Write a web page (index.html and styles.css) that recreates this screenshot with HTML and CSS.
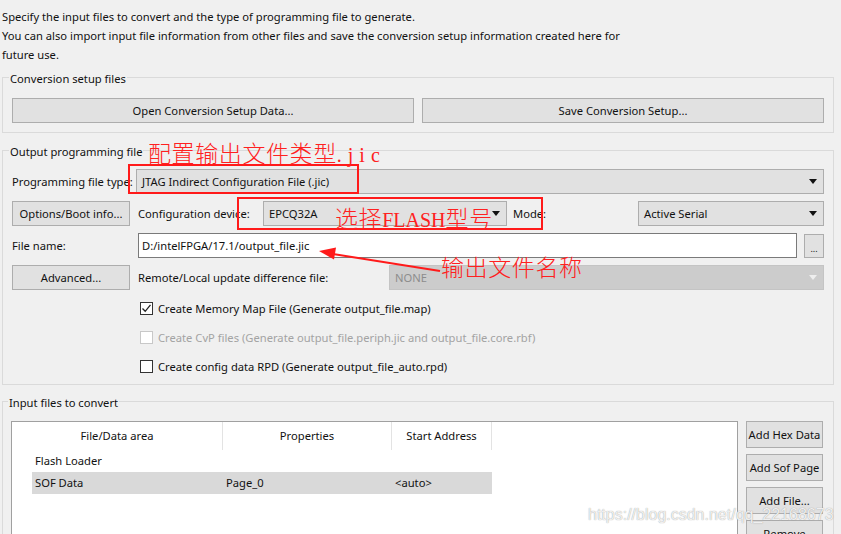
FILE: index.html
```html
<!DOCTYPE html>
<html lang="en">
<head>
  <meta charset="UTF-8">
  <title>Convert Programming File</title>
  <link rel="stylesheet" href="styles.css">
</head>
<body>
  <div class="dialog">
    <p class="intro">Specify the input files to convert and the type of programming file to generate.<br>
      You can also import input file information from other files and save the conversion setup information created here for<br>
      future use.</p>

    <!-- Conversion setup -->
    <fieldset class="group group-setup">
      <legend>Conversion setup files</legend>
      <div class="setup-buttons">
        <button class="btn">Open Conversion Setup Data...</button>
        <button class="btn">Save Conversion Setup...</button>
      </div>
    </fieldset>

    <!-- Output file -->
    <fieldset class="group group-output">
      <legend>Output programming file</legend>
      <div class="form-row">
        <span class="label label-type">Programming file type:</span>
        <div class="combo combo-fill">JTAG Indirect Configuration File (.jic)</div>
      </div>
      <div class="form-row">
        <button class="btn btn-side">Options/Boot info...</button>
        <span class="label label-device">Configuration device:</span>
        <div class="combo combo-device">EPCQ32A</div>
        <span class="label label-mode">Mode:</span>
        <div class="combo combo-fill">Active Serial</div>
      </div>
      <div class="form-row">
        <span class="label label-file">File name:</span>
        <div class="text-input">D:/intelFPGA/17.1/output_file.jic</div>
        <button class="btn btn-browse">...</button>
      </div>
      <div class="form-row last">
        <button class="btn btn-side">Advanced...</button>
        <span class="label label-remote">Remote/Local update difference file:</span>
        <div class="combo combo-fill disabled">NONE</div>
      </div>
      <div class="check-row">
        <span class="check checked">
          <svg width="11" height="11" viewBox="0 0 11 11"><polyline points="1.5,5.5 4.2,8.3 9.5,1.8" fill="none" stroke="#222" stroke-width="1.3"/></svg>
        </span>
        <span>Create Memory Map File (Generate output_file.map)</span>
      </div>
      <div class="check-row disabled">
        <span class="check"></span>
        <span>Create CvP files (Generate output_file.periph.jic and output_file.core.rbf)</span>
      </div>
      <div class="check-row">
        <span class="check"></span>
        <span>Create config data RPD (Generate output_file_auto.rpd)</span>
      </div>
    </fieldset>

    <!-- Input files -->
    <fieldset class="group group-input">
      <legend>Input files to convert</legend>
      <div class="input-area">
        <div class="file-table">
          <div class="table-head">
            <span>File/Data area</span>
            <span>Properties</span>
            <span>Start Address</span>
          </div>
          <div class="table-row">
            <span>Flash Loader</span>
            <span></span>
            <span></span>
          </div>
          <div class="table-row selected">
            <span>SOF Data</span>
            <span>Page_0</span>
            <span>&lt;auto&gt;</span>
          </div>
        </div>
        <div class="side-buttons">
          <button class="btn">Add Hex Data</button>
          <button class="btn">Add Sof Page</button>
          <button class="btn">Add File...</button>
          <button class="btn">Remove</button>
        </div>
      </div>
    </fieldset>
  </div>

  <!-- red annotations drawn over the dialog -->
  <div class="mark mark-type"></div>
  <div class="mark mark-flash"></div>
  <span class="note note-type">配置输出文件类型<span class="latin latin-ext">.jic</span></span>
  <span class="note note-flash">选择<span class="latin">FLASH</span>型号</span>
  <span class="note note-name">输出文件名称</span>
  <svg class="arrow" width="841" height="534" viewBox="0 0 841 534">
    <line x1="440" y1="271" x2="333" y2="254" stroke="#ff1a1a" stroke-width="2"/>
    <polygon points="319,251 336,247.5 334,259.5" fill="#ff1a1a"/>
  </svg>

  <span class="watermark">https://blog.csdn.net/qq_22168673</span>
</body>
</html>
```

FILE: styles.css
```css
* {
  box-sizing: border-box;
}

body {
  margin: 0;
  width: 841px;
  height: 534px;
  overflow: hidden;
  position: relative;
  background: #f0f0f0;
  color: #111;
  font-family: 'Noto Sans', sans-serif;
  font-size: 11.2px;
}

.intro {
  margin: 0;
  padding: 7px 2px 0;
  line-height: 19px;
}

/* Group boxes */
.group {
  margin: 3px 7px 0 2px;
  padding: 0 9px;
  border: 1px solid #dadada;
  min-width: 0;
}

.group legend {
  padding: 4px 1px 0;
  margin-left: -3px;
  line-height: 16px;
}

.group-setup {
  padding-top: 11px;
  padding-bottom: 9px;
}

.group-output {
  margin-top: 7px;
  padding-top: 9px;
  padding-bottom: 3px;
}

.group-input {
  margin-top: 6px;
  padding-top: 10px;
  padding-left: 8px;
}

/* Controls */
.btn {
  background: #e1e1e1;
  border: 1px solid #adadad;
  color: inherit;
  font: inherit;
  padding: 0;
}

.setup-buttons {
  display: flex;
  gap: 8px;
}

.setup-buttons .btn {
  flex: 1;
  height: 25px;
}

.form-row {
  display: flex;
  align-items: center;
  height: 25px;
  margin-bottom: 7px;
}

.form-row.last {
  margin-bottom: 4px;
}

.label {
  white-space: nowrap;
  overflow: hidden;
}

.label-type { width: 124px; }
.label-device { width: 125px; margin-left: 8px; }
.label-mode { width: 125px; margin-left: 6px; }
.label-file { width: 126px; }
.label-remote { width: 251px; margin-left: 8px; }

.btn-side {
  width: 118px;
  height: 25px;
}

.btn-browse {
  width: 20px;
  height: 24px;
  margin-left: 7px;
  padding-top: 6px;
  font-size: 9px;
  line-height: 1;
}

.combo {
  height: 25px;
  display: flex;
  align-items: center;
  justify-content: space-between;
  padding: 0 6px 0 5px;
  background: #e1e1e1;
  border: 1px solid #adadad;
}

.combo::after {
  content: '';
  border-left: 4px solid transparent;
  border-right: 4px solid transparent;
  border-top: 5px solid #111;
}

.combo-fill { flex: 1; }
.combo-device { width: 244px; }

.combo.disabled {
  background: #cccccc;
  border-color: #c4c4c4;
  color: #8c8c8c;
}

.combo.disabled::after {
  border-top-color: #eeeeee;
}

.text-input {
  flex: 1;
  height: 25px;
  display: flex;
  align-items: center;
  padding-left: 3px;
  background: #fff;
  border: 1px solid #7a7a7a;
}

/* Check boxes */
.check-row {
  display: flex;
  align-items: center;
  gap: 5px;
  height: 29px;
  padding-left: 128px;
}

.check {
  width: 13px;
  height: 13px;
  display: flex;
  align-items: center;
  justify-content: center;
  background: #fff;
  border: 1px solid #333;
}

.check-row.disabled {
  color: #a3a3a3;
}

.check-row.disabled .check {
  border-color: #c8c8c8;
}

/* Input files table */
.input-area {
  display: flex;
  gap: 8px;
}

.file-table {
  width: 727px;
  height: 140px;
  background: #fff;
  border: 1px solid #a0a0a0;
}

.table-head {
  display: grid;
  grid-template-columns: 211px 169px 100px;
  height: 28px;
}

.table-head span {
  text-align: center;
  line-height: 28px;
  border-right: 1px solid #e3e3e3;
}

.table-row {
  display: grid;
  grid-template-columns: 191px 169px 100px;
  width: 460px;
  margin-left: 20px;
  height: 22px;
  line-height: 22px;
}

.table-row span {
  padding-left: 3px;
}

.table-row.selected {
  background: #d9d9d9;
}

.side-buttons {
  width: 77px;
  display: flex;
  flex-direction: column;
  gap: 6px;
}

.side-buttons .btn {
  height: 27px;
}

/* Red annotations */
.mark {
  position: absolute;
  border: 2px solid #ff1a1a;
}

.mark-type {
  left: 128px;
  top: 164px;
  width: 231px;
  height: 30px;
}

.mark-flash {
  left: 237px;
  top: 197px;
  width: 306px;
  height: 33px;
}

.note {
  position: absolute;
  color: #ff2020;
  font-family: 'Noto Sans CJK SC', sans-serif;
  font-size: 23px;
  font-weight: 300;
  line-height: 26px;
  letter-spacing: 0.6px;
  white-space: nowrap;
}

.note .latin {
  font-family: 'Liberation Serif', serif;
  font-size: 20px;
  letter-spacing: 0;
}

.note .latin-ext {
  letter-spacing: 6px;
}

.note-type { left: 148px; top: 139px; }
.note-flash { left: 335px; top: 204px; }
.note-name { left: 441px; top: 253px; }

.arrow {
  position: absolute;
  left: 0;
  top: 0;
  pointer-events: none;
}

.watermark {
  position: absolute;
  left: 588px;
  top: 506px;
  font-family: 'Liberation Sans', sans-serif;
  font-size: 16px;
  color: rgba(255, 255, 255, 0.85);
  text-shadow: 0 0 1px #8a8a8a;
}
```
